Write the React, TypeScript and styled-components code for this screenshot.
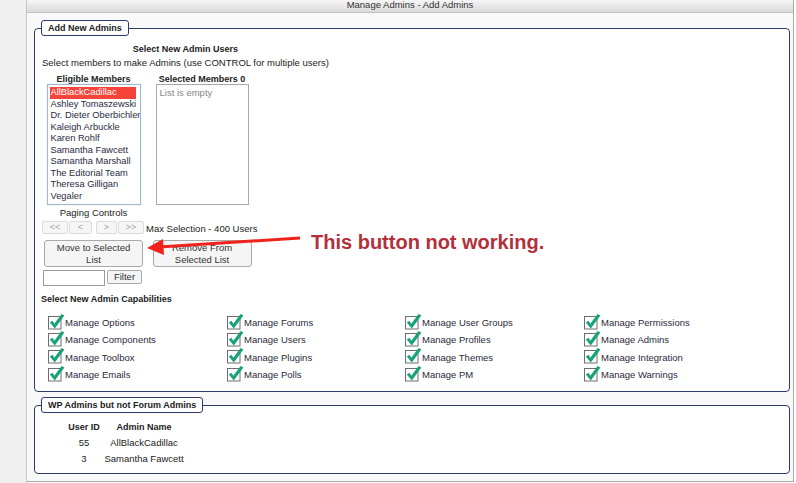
import React from "react"
import styled, { createGlobalStyle } from "styled-components"

const NAVY = "#2e3a69"

const GlobalStyle = createGlobalStyle`
  html, body {
    margin: 0;
    padding: 0;
    background: #ffffff;
  }
  body {
    font-family: "Liberation Sans", Arial, sans-serif;
    font-size: 9.5px;
    color: #222;
  }
`

const eligible = [
  "AllBlackCadillac",
  "Ashley Tomaszewski",
  "Dr. Dieter Oberbichler",
  "Kaleigh Arbuckle",
  "Karen Rohlf",
  "Samantha Fawcett",
  "Samantha Marshall",
  "The Editorial Team",
  "Theresa Gilligan",
  "Vegaler"
]

const capabilities = [
  "Manage Options",
  "Manage Forums",
  "Manage User Groups",
  "Manage Permissions",
  "Manage Components",
  "Manage Users",
  "Manage Profiles",
  "Manage Admins",
  "Manage Toolbox",
  "Manage Plugins",
  "Manage Themes",
  "Manage Integration",
  "Manage Emails",
  "Manage Polls",
  "Manage PM",
  "Manage Warnings"
]

const wpAdmins = [
  { id: 55, name: "AllBlackCadillac" },
  { id: 3, name: "Samantha Fawcett" }
]

function CheckIcon() {
  return (
    <svg width="17" height="17" viewBox="0 0 17 17">
      <rect x="0.5" y="3.5" width="12.5" height="12.5" fill="#fff" stroke="#6e6e6e" />
      <polygon
        points="1.8,9.4 4.5,7.8 6.3,10.8 13.6,1 16.4,2.4 6.8,15.6"
        fill="#17a27a"
      />
    </svg>
  )
}

export default function App() {
  return (
    <Page>
      <GlobalStyle />
      <Gutter />
      <Panel>
        <TitleBar>Manage Admins - Add Admins</TitleBar>
        <Body>
          <Group>
            <Legend>Add New Admins</Legend>
            <Picker>
              <PickerTitle>Select New Admin Users</PickerTitle>
              <Hint>Select members to make Admins (use CONTROL for multiple users)</Hint>
              <PickerGrid>
                <ColHead>Eligible Members</ColHead>
                <ColHead>Selected Members 0</ColHead>
                <ListBox $tone="blue">
                  {eligible.map((name, i) => (
                    <Option key={name} $selected={i === 0}>
                      {name}
                    </Option>
                  ))}
                </ListBox>
                <ListBox $tone="gray">
                  <Empty>List is empty</Empty>
                </ListBox>
                <Paging>
                  <PagingLabel>Paging Controls</PagingLabel>
                  <PagingButtons>
                    <PageButton $w={26}>&lt;&lt;</PageButton>
                    <PageButton $w={23}>&lt;</PageButton>
                    <PageButton $w={21} $gapLeft={3}>&gt;</PageButton>
                    <PageButton $w={26}>&gt;&gt;</PageButton>
                  </PagingButtons>
                </Paging>
                <MaxSel>Max Selection - 400 Users</MaxSel>
                <ActionButton>
                  Move to Selected
                  <br />
                  List
                </ActionButton>
                <ActionButton>
                  Remove From
                  <br />
                  Selected List
                </ActionButton>
                <FilterRow>
                  <FilterInput />
                  <SmallButton>Filter</SmallButton>
                </FilterRow>
              </PickerGrid>
            </Picker>
            <SectionLabel>Select New Admin Capabilities</SectionLabel>
            <CapGrid>
              {capabilities.map(cap => (
                <Cap key={cap}>
                  <CheckIcon />
                  <span>{cap}</span>
                </Cap>
              ))}
            </CapGrid>
          </Group>

          <Group $second>
            <Legend>WP Admins but not Forum Admins</Legend>
            <AdminTable>
              <Th>User ID</Th>
              <Th>Admin Name</Th>
              {wpAdmins.map(a => (
                <React.Fragment key={a.id}>
                  <Td>{a.id}</Td>
                  <Td>{a.name}</Td>
                </React.Fragment>
              ))}
            </AdminTable>
          </Group>
        </Body>
      </Panel>

      <Callout>
        <svg width="160" height="30" viewBox="0 0 160 30">
          <line x1="18" y1="19" x2="159" y2="10" stroke="#f0221c" strokeWidth="3" />
          <polygon points="6,20 22,11 23,27" fill="#f0221c" />
        </svg>
        <CalloutText>This button not working.</CalloutText>
      </Callout>
    </Page>
  )
}

const Page = styled.div`
  position: relative;
  display: flex;
  width: 796px;
  height: 483px;
  overflow: hidden;
`

const Gutter = styled.div`
  width: 26px;
  flex: none;
  background: #efefef;
  border-right: 1px solid #c6c6c6;
`

const Panel = styled.div`
  width: 766px;
  flex: none;
  background: #f8f8f8;
  border-right: 1px solid #a9a9a9;
  border-bottom: 1px solid #a9a9a9;
  height: 481px;
  display: flex;
  flex-direction: column;
`

const TitleBar = styled.div`
  height: 12px;
  line-height: 10px;
  text-align: center;
  font-size: 9.5px;
  color: #333;
  background: linear-gradient(#f6f6f6, #dadada);
  border-bottom: 1px solid #c2c2c2;
`

const Body = styled.div`
  padding: 7px 3px 0 7px;
`

const Group = styled.fieldset<{ $second?: boolean }>`
  margin: ${p => (p.$second ? "5px 0 0" : "0")};
  padding: 0 6px ${p => (p.$second ? "7px" : "8px")};
  border: 1px solid ${NAVY};
  border-radius: 4px;
  background: #fff;
  min-width: 0;
`

const Legend = styled.legend`
  padding: 0 6px;
  height: 14px;
  line-height: 14px;
  border: 1px solid ${NAVY};
  border-radius: 3px;
  background: #fff;
  font-weight: bold;
  font-size: 9px;
  color: #222;
`

const Picker = styled.div`
  display: inline-block;
  margin-left: 1px;
  margin-top: 7px;
`

const PickerTitle = styled.div`
  text-align: center;
  font-weight: bold;
  font-size: 9px;
  line-height: 12px;
`

const Hint = styled.div`
  line-height: 14px;
  margin-top: 1px;
`

const PickerGrid = styled.div`
  display: grid;
  grid-template-columns: 103px 112px;
  column-gap: 1px;
  margin-top: 4px;
`

const ColHead = styled.div`
  text-align: center;
  font-weight: bold;
  font-size: 9px;
  line-height: 10px;
`

const ListBox = styled.div<{ $tone: "blue" | "gray" }>`
  justify-self: center;
  width: ${p => (p.$tone === "blue" ? 94 : 93)}px;
  height: 121px;
  box-sizing: border-box;
  padding: 2px 2px;
  background: #fff;
  border: 1px solid ${p => (p.$tone === "blue" ? "#9fb9cc" : "#a9a9a9")};
  box-shadow: ${p => (p.$tone === "blue" ? "0 0 1px #bcd3e4" : "none")};
  overflow: hidden;
`

const Option = styled.div<{ $selected?: boolean }>`
  height: 11.5px;
  line-height: 11.5px;
  padding-left: 1px;
  white-space: nowrap;
  font-size: 9.3px;
  color: ${p => (p.$selected ? "#fff" : "#2a2a40")};
  background: ${p => (p.$selected ? "#f5443a" : "transparent")};
  margin-right: ${p => (p.$selected ? "2px" : "0")};
`

const Empty = styled.div`
  color: #888;
  padding-left: 1px;
  line-height: 12px;
`

const Paging = styled.div`
  padding-top: 2px;
`

const PagingLabel = styled.div`
  text-align: center;
  line-height: 11px;
`

const PagingButtons = styled.div`
  display: flex;
  margin-top: 3px;
  gap: 1px;
`

const PageButton = styled.div<{ $w: number; $gapLeft?: number }>`
  width: ${p => p.$w}px;
  height: 13px;
  box-sizing: border-box;
  margin-left: ${p => p.$gapLeft ?? 0}px;
  border: 1px solid #dcdcdc;
  border-radius: 2px;
  background: #f6f6f6;
  color: #a8a8a8;
  font-size: 9px;
  line-height: 11px;
  text-align: center;
`

const MaxSel = styled.div`
  align-self: end;
  line-height: 11px;
  white-space: nowrap;
`

const ActionButton = styled.div`
  justify-self: center;
  margin-top: 6px;
  width: 99px;
  height: 27px;
  box-sizing: border-box;
  border: 1px solid #a9a9a9;
  border-radius: 3px;
  background: #f5f5f5;
  text-align: center;
  line-height: 12px;
  padding-top: 1px;
  color: #333;
`

const FilterRow = styled.div`
  display: flex;
  align-items: flex-start;
  gap: 2px;
  margin-top: 3px;
  padding-left: 1px;
`

const FilterInput = styled.div`
  width: 62px;
  height: 16px;
  box-sizing: border-box;
  border: 1px solid #9a9a9a;
  background: #fff;
`

const SmallButton = styled.div`
  width: 35px;
  height: 14px;
  box-sizing: border-box;
  border: 1px solid #a9a9a9;
  border-radius: 2px;
  background: #f5f5f5;
  text-align: center;
  line-height: 12px;
  color: #333;
`

const SectionLabel = styled.div`
  margin-top: 8px;
  font-weight: bold;
  font-size: 9px;
  line-height: 11px;
`

const CapGrid = styled.div`
  display: grid;
  grid-template-columns: 179px 178px 179px 179px;
  grid-auto-rows: 17.3px;
  margin: 9px 0 0 7px;
`

const Cap = styled.div`
  display: flex;
  align-items: center;
  white-space: nowrap;
  color: #2a2a3a;

  svg {
    flex: none;
    margin-top: -3px;
  }
`

const AdminTable = styled.div`
  display: grid;
  grid-template-columns: 38px 82px;
  justify-items: center;
  grid-template-rows: 15px 16px 15px;
  margin: 7px 0 0 24px;
  width: max-content;
`

const Th = styled.div`
  font-weight: bold;
  font-size: 9px;
  line-height: 15px;
`

const Td = styled.div`
  line-height: 15px;
`

const Callout = styled.div`
  position: absolute;
  left: 141px;
  top: 228px;
  display: flex;
  align-items: center;
`

const CalloutText = styled.div`
  margin-left: 10px;
  margin-top: -2px;
  font-weight: bold;
  font-size: 20px;
  color: #b3303a;
  white-space: nowrap;
`
